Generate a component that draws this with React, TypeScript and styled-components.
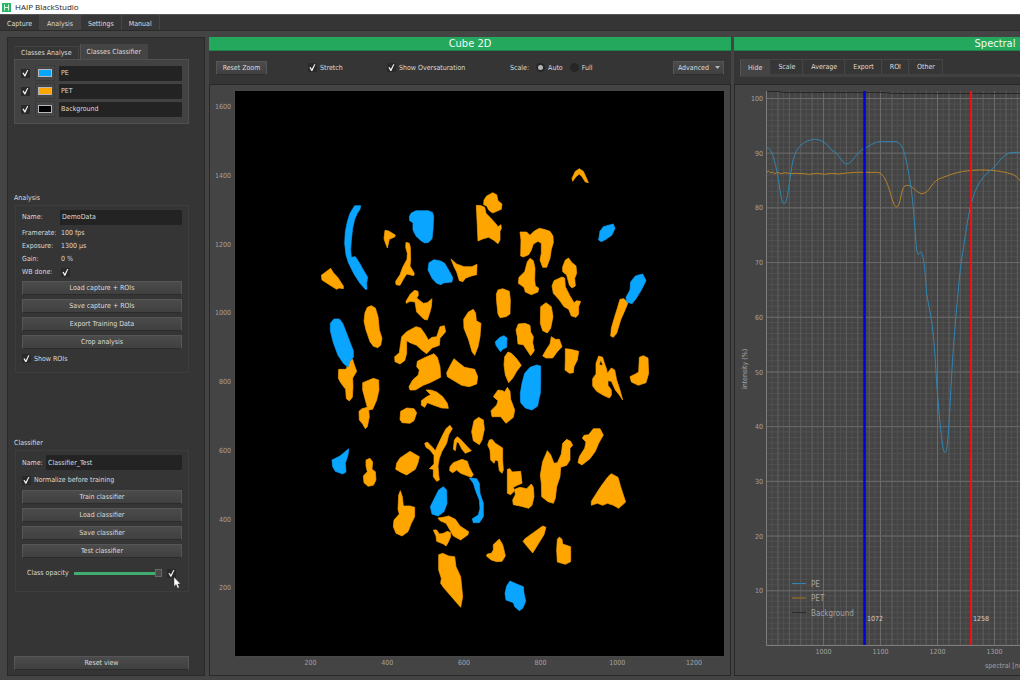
import React from 'react';
import styled, { createGlobalStyle } from 'styled-components';

const GlobalStyle = createGlobalStyle`
  *, *::before { box-sizing: border-box; }
  body {
    margin: 0;
    background: #444;
    color: #dcdcdc;
    font: 7px/10px 'DejaVu Sans Condensed', 'DejaVu Sans', sans-serif;
    overflow-x: hidden;
  }
  button, input { font: inherit; color: inherit; margin: 0; }
`;

const Page = styled.div`
  min-height: 100vh;
  display: flex;
  flex-direction: column;
  overflow: hidden;
`;

const TitleBar = styled.header`
  height: 14px;
  display: flex;
  align-items: center;
  gap: 4px;
  padding-left: 2px;
  background: #fff;
  color: #222;
  font: 8px/14px 'Open Sans', sans-serif;
`;

const MainTabs = styled.nav`
  height: 17px;
  display: flex;
  align-items: flex-end;
  background: #353535;
  border-top: 1px solid #555;
  border-bottom: 1px solid #2b2b2b;
`;

const Tab = styled.button<{ $active?: boolean; $height: number; $pad?: number }>`
  height: ${p => (p.$active ? p.$height + 2 : p.$height)}px;
  padding: 0 ${p => p.$pad ?? 7}px;
  border: 1px solid #454545;
  border-bottom: 0;
  border-left-color: ${p => (p.$active ? '#555' : '#3a3a3a')};
  background: ${p => (p.$active ? '#444' : '#363636')};
  white-space: nowrap;
`;

const MainTab = styled(Tab)`
  height: 15px;
  padding: 2px 7px 0;
  border-top: 0;
  border-left: 0;
`;

const Workspace = styled.main`
  flex: 1;
  display: grid;
  grid-template-columns: 199px minmax(522px, 1fr) minmax(522px, 1fr);
  column-gap: 3px;
  padding: 6px 7px 4px;
`;

const Sidebar = styled.aside`
  display: flex;
  flex-direction: column;
  justify-content: space-between;
  margin-right: 1px;
  padding: 6px 15px 5px 6px;
  background: #353535;
  border: 1px solid #292929;
`;

const ClassSection = styled.section`
  padding-bottom: 3px;
`;

const TabRow = styled.div`
  display: flex;
  align-items: flex-end;
  gap: 1px;
`;

const ClassList = styled.div`
  display: flex;
  flex-direction: column;
  gap: 2px;
  padding: 5px 6px 6px;
  background: #424242;
  border: 1px solid #505050;
`;

const ClassRow = styled.div`
  display: grid;
  grid-template-columns: 10px 20px 1fr;
  column-gap: 4px;
  align-items: center;
`;

const Swatch = styled.button<{ $color: string }>`
  height: 16px;
  padding: 3px 2px;
  border: 1px solid #393939;
  background: #464646;
  &::before {
    content: '';
    display: block;
    height: 8px;
    background: ${p => p.$color};
    border: 1px solid #b4b8bc;
  }
`;

const TextInput = styled.input`
  width: 100%;
  min-width: 0;
  height: 15px;
  padding: 0 2px;
  border: 0;
  border-radius: 1px;
  background: #232323;
`;

const Check = styled.input.attrs({ type: 'checkbox' })`
  appearance: none;
  flex: none;
  width: 9px;
  height: 9px;
  background: #292929;
  display: grid;
  place-items: center;
  &:checked::before {
    content: '';
    width: 7px;
    height: 7px;
    background: #f2f2f2;
    clip-path: polygon(6% 50%, 22% 44%, 40% 72%, 76% 2%, 92% 2%, 48% 100%, 34% 100%);
  }
`;

const Radio = styled.input.attrs({ type: 'radio' })`
  appearance: none;
  flex: none;
  width: 9px;
  height: 9px;
  border-radius: 50%;
  background: #262626;
  display: grid;
  place-items: center;
  &:checked::before {
    content: '';
    width: 5px;
    height: 5px;
    border-radius: 50%;
    background: #b4b4b4;
  }
`;

const Inline = styled.label`
  display: flex;
  align-items: center;
  gap: 3px;
  white-space: nowrap;
`;

const PushButton = styled.button`
  display: flex;
  align-items: center;
  justify-content: center;
  gap: 6px;
  width: 100%;
  height: 14px;
  padding: 0 5px;
  border: 1px solid #565656;
  border-bottom-color: #2c2c2c;
  background: linear-gradient(#4b4b4b, #404040);
  white-space: nowrap;
`;

const ToolButton = styled(PushButton)`
  width: auto;
  min-width: 51px;
`;

const MenuButton = styled(ToolButton)`
  padding: 0 3px 0 4px;
`;

const SectionTitle = styled.h2`
  margin: 0;
  font: inherit;
  line-height: 14px;
`;

const Group = styled.div<{ $bottom: number }>`
  display: flex;
  flex-direction: column;
  margin: 0 0 0 1px;
  padding: 4px 6px ${p => p.$bottom}px;
  border: 1px solid #3d3d3d;
`;

const NameField = styled.label<{ $label: number }>`
  display: grid;
  grid-template-columns: ${p => p.$label}px 1fr;
  align-items: center;
`;

const Facts = styled.dl`
  display: grid;
  grid-template-columns: 39px 1fr;
  grid-auto-rows: 13px;
  align-items: center;
  margin: 2px 0;
  dt, dd { margin: 0; }
`;

const ButtonStack = styled.div`
  display: flex;
  flex-direction: column;
  gap: 4px;
`;

const CheckLine = styled(Inline)`
  height: 20px;
`;

const OpacityRow = styled.div`
  display: flex;
  align-items: center;
  gap: 5px;
  padding: 10px 6px 0 5px;
  label { white-space: nowrap; }
`;

const Slider = styled.input.attrs({ type: 'range' })`
  appearance: none;
  flex: 1;
  min-width: 0;
  height: 8px;
  background: linear-gradient(#3fae6f, #3fae6f) center / 100% 3px no-repeat;
  &::-webkit-slider-thumb {
    appearance: none;
    width: 7px;
    height: 8px;
    border: 1px solid #686868;
    background: #4a4a4a;
  }
`;

const PointerSpot = styled.span`
  position: relative;
  display: flex;
  svg { position: absolute; left: 6px; top: 7px; }
`;

const Panel = styled.section`
  display: flex;
  flex-direction: column;
  min-width: 0;
  background: #353535;
`;

const PanelTitle = styled.h1`
  margin: 0;
  height: 14px;
  background: #24a85e;
  border-bottom: 1px solid #1c8349;
  color: #f0faf3;
  font-size: 11px;
  line-height: 14px;
  font-weight: 400;
  text-align: center;
`;

const Toolbar = styled.div`
  height: 33px;
  display: grid;
  grid-template-columns: 92px 79px 123px 1fr auto;
  align-items: center;
  padding: 0 7px;
`;

const RadioGroup = styled.div`
  display: flex;
  align-items: center;
  gap: 7px;
`;

const SpectralTabs = styled.div`
  height: 33px;
  display: flex;
  align-items: flex-start;
  padding: 8px 0 0 6px;
  background: linear-gradient(#414141, #414141) 6px 23px / 100% 3px no-repeat;
`;

const Graph = styled.div`
  flex: 1;
  background: #444;
  border: 1px solid #282828;
  svg { display: block; width: 100%; height: auto; }
  text { font-size: 7px; fill: #a2a2a2; }
`;

const toolIcon = (
  <svg width="9" height="9" viewBox="0 0 9 9" aria-hidden="true">
    <rect width="9" height="9" fill="#2db566" />
    <path d="M2.5 1.5v6M6.5 1.5v6M2.5 4.5h4" stroke="#d9f5e4" fill="none" />
  </svg>
);

/* Particle outlines, three units to one screen pixel, split over four tiles of the sample tray. */
type Tile = { x: number; y: number; pe: string[]; pet: string[] };

const tiles: Tile[] = [
  {
    x: 101, y: 76,
    pe: [
      '134,137 152,137 150,148 142,160 134,178 128,205 124,240 122,270 124,292 136,290 148,308 160,330 173,352 170,368 171,388 166,388 150,370 132,342 116,310 108,285 104,250 106,215 112,185 120,160',
      '308,157 318,152 355,152 368,158 371,170 369,210 366,236 356,247 345,249 334,243 318,228 309,210 309,188 299,182 298,170 303,160',
      '357,308 372,299 392,303 404,310 418,334 428,352 426,366 400,369 393,374 380,370 367,356 354,330',
      '61,490 72,477 88,477 98,490 108,515 122,552 130,572 130,592 120,604 114,622 100,610 84,586 70,548 61,512',
    ],
    pet: [
      '225,211 236,213 256,225 254,231 238,238 232,264 226,248 222,236',
      '288,247 298,250 301,262 302,300 300,318 313,340 311,347 290,342 281,356 270,376 258,374 257,364 270,344 278,322 291,298 292,280 287,262',
      '423,297 440,312 462,320 486,320 501,313 500,344 484,348 466,355 459,365 448,362 440,336 432,320',
      '34,346 62,325 70,338 83,352 100,378 100,386 87,384 80,388 70,382 36,360',
      '301,402 314,391 324,394 325,406 320,414 340,430 352,428 366,416 364,440 360,456 352,480 342,478 320,456 315,426 300,424 289,430 288,424',
      '165,458 172,442 184,437 196,444 204,470 208,510 216,535 212,556 203,563 190,559 180,545 168,510 162,484',
      '86,628 108,628 118,604 128,598 132,612 140,634 128,654 129,680 127,712 118,723 109,716 107,688 92,668 85,655',
      '158,668 190,655 206,660 207,690 200,720 188,748 176,750 178,770 172,800 166,806 158,792 148,780 147,754 156,746 172,742 166,720 158,690',
      '318,500 332,504 345,522 355,540 366,532 380,530 390,500 403,497 407,515 390,535 388,556 366,564 350,581 335,570 320,556 300,548 290,542 290,580 284,602 270,612 255,605 254,590 268,578 272,550 275,530 290,515',
      '322,604 346,592 372,581 382,592 390,620 392,652 360,668 340,676 316,690 300,690 297,680 308,660 325,645 328,630 320,620',
      '432,596 446,608 464,622 494,628 503,650 500,672 478,680 455,676 435,664 412,650 410,638 420,618',
      '461,478 475,456 490,448 497,460 499,482 513,490 510,530 504,560 494,586 486,575 476,540 462,505',
    ],
  },
  {
    x: 261, y: 76,
    pe: [
      '400,200 430,192 435,206 425,226 408,238 394,245 386,240 390,214',
      '496,348 518,342 528,362 514,390 498,416 486,431 470,426 468,412 480,390 482,366',
      '90,532 102,527 111,534 110,562 98,568 92,575 86,568 78,556 76,545',
      '164,640 180,622 200,615 212,618 212,660 211,700 206,720 203,738 186,750 166,744 152,728 151,700 156,670',
    ],
    pet: [
      '306,55 316,34 328,26 340,34 352,60 355,68 346,66 336,50 328,42 318,50 308,64',
      '50,108 68,98 80,104 84,122 96,132 94,148 80,154 68,159 56,150 50,138 41,134 42,120',
      '19,136 34,137 44,142 48,160 62,174 78,192 84,200 93,194 94,206 90,214 90,240 84,251 70,240 56,232 40,236 24,243 22,200',
      '150,216 170,216 180,226 192,214 208,205 222,208 240,214 249,228 250,248 244,268 240,295 230,322 218,322 210,300 214,280 214,250 204,244 190,252 184,270 176,284 160,291 152,288 153,240',
      '172,305 180,295 190,302 195,325 194,360 196,378 206,384 204,396 184,404 166,396 162,382 145,370 147,352 164,335',
      '286,300 296,294 304,306 318,318 320,340 314,355 316,378 306,384 298,375 290,345 278,335 278,320',
      '252,362 276,351 284,354 286,380 300,408 312,428 320,422 332,424 326,440 326,462 318,472 304,468 296,448 282,440 268,420 250,400 246,378',
      '84,390 98,386 118,394 121,420 120,462 108,470 90,473 84,462 80,425 79,402',
      '212,440 228,428 244,440 249,470 242,505 232,519 218,512 211,490',
      '450,418 462,416 474,428 466,448 452,480 440,520 430,532 422,528 424,505 434,470 442,445',
      '145,492 165,490 180,496 182,516 190,530 188,548 193,572 182,587 172,572 160,554 144,552 142,530 138,510',
      '244,530 256,538 268,538 276,560 262,575 248,594 228,594 218,588 228,570 240,552',
      '286,566 302,568 326,574 322,600 312,620 310,638 298,640 285,630 286,600',
      '104,590 114,576 124,580 140,596 154,616 140,634 128,655 116,668 106,645 102,615',
      '378,610 386,588 398,592 404,612 398,614 392,600 388,614 396,616 404,612 410,628 412,640 424,624 434,630 440,660 450,690 458,720 448,705 436,690 424,664 414,662 414,676 424,690 424,706 418,714 400,706 380,694 368,678 368,656 378,642',
      '508,592 520,587 534,594 536,640 528,668 505,676 484,666 480,650 496,642 506,636',
    ],
  },
  {
    x: 101, y: 296,
    pe: [
      '66,240 90,228 116,206 114,225 106,250 108,276 98,282 76,274 68,260',
      '386,330 400,320 410,330 411,370 402,395 384,408 366,402 361,380 372,358',
      '478,294 500,296 508,310 510,340 520,370 520,410 508,428 490,428 487,416 505,405 510,385 508,360 498,335 490,310',
    ],
    pet: [
      '348,30 362,30 380,36 398,50 412,70 415,85 395,84 372,76 352,68 344,82 334,76 334,62 350,50 362,44',
      '272,94 290,84 312,86 320,98 312,122 300,130 276,128 270,118',
      '344,190 352,186 366,200 376,212 386,190 398,165 408,146 420,136 427,146 416,165 410,190 396,214 388,235 384,258 386,285 388,300 380,304 370,290 370,268 358,266 372,252 372,226 360,210 348,202',
      '430,208 433,180 441,170 450,176 470,198 484,212 466,220 456,208 446,188 440,186 436,212',
      '492,122 506,112 520,120 523,148 516,180 508,194 490,182 485,155',
      '168,240 180,235 188,246 186,268 196,275 198,300 190,316 174,319 162,308 160,288 172,275 168,258',
      '270,234 300,214 328,230 324,248 316,268 290,285 275,278 257,268 260,250',
      '420,260 430,248 456,238 472,244 478,262 490,284 484,292 468,286 452,280 440,270 428,278 419,272',
      '264,388 266,345 271,332 277,350 280,378 300,378 314,382 314,410 304,430 294,455 276,468 258,460 250,440 252,420 268,402',
      '384,414 400,412 416,408 436,418 450,438 476,455 474,464 452,480 430,468 420,450 408,430 390,422',
      '370,450 380,450 388,462 400,460 412,454 422,458 422,470 414,488 408,498 400,492 380,484 378,468',
      '386,524 398,520 416,528 434,530 438,560 452,590 456,630 458,650 452,682 440,668 420,645 400,622 392,610 394,595 386,570',
    ],
  },
  {
    x: 261, y: 296,
    pe: ['120,603 140,612 160,620 162,640 167,664 158,685 148,692 134,680 130,668 108,660 105,640 110,618'],
    pet: [
      '70,50 84,30 98,32 104,36 112,22 120,34 122,58 134,90 130,112 108,130 92,110 66,110 63,92 80,75 84,62',
      '58,180 66,178 76,190 98,204 98,240 100,270 96,280 88,272 84,242 76,240 72,250 62,240 60,210 53,195',
      '112,268 120,266 126,276 152,274 156,310 142,316 130,322 134,332 122,344 112,340 112,310',
      '134,328 150,322 170,326 184,312 190,322 192,350 186,376 176,385 150,378 130,374 128,360 136,344',
      '232,212 242,224 252,250 262,248 274,222 278,190 290,178 302,184 308,196 300,205 300,240 290,256 272,262 270,290 260,320 256,355 250,370 234,365 215,350 214,310 211,285 218,245',
      '370,146 390,146 400,165 386,190 376,214 360,236 336,255 324,248 328,230 344,205 348,186 337,175 342,166 356,164',
      '414,290 424,281 444,292 452,320 460,345 467,366 446,385 430,376 412,370 398,376 382,370 364,376 364,364 376,345 392,320',
      '88,477 98,494 102,510 106,528 96,544 80,545 64,540 49,528 52,522 64,520 70,510 70,494',
      '218,438 228,442 222,464 206,490 188,519 176,505 159,484 165,476 190,458',
      '262,478 268,471 276,478 278,492 302,500 302,545 286,553 262,546 260,510',
    ],
  },
];

const range = (n: number) => Array.from({ length: n }, (_, i) => i);

function CubeView() {
  return (
    <svg viewBox="1 1 520 589" role="img" aria-label="Classified particles">
      <rect x="25" y="7" width="490" height="566" fill="#000" />
      <path d="M25.5 7v565.5H515" fill="none" stroke="#777" strokeWidth="0.6" />
      {range(8).map(i => (
        <text key={i} x="22" y={25 + i * 68.75} textAnchor="end">{1600 - i * 200}</text>
      ))}
      {range(6).map(i => (
        <text key={i} x={101.5 + i * 76.7} y="581" textAnchor="middle">{200 + i * 200}</text>
      ))}
      {tiles.map((t, i) => (
        <g key={i} transform={`translate(${t.x} ${t.y}) scale(0.33333)`} strokeWidth="2" strokeLinejoin="round">
          <g fill="#ffa500" stroke="#ffa500">{t.pet.map(p => <polygon key={p} points={p} />)}</g>
          <g fill="#0aa5ff" stroke="#0aa5ff">{t.pe.map(p => <polygon key={p} points={p} />)}</g>
        </g>
      ))}
    </svg>
  );
}

const PE_CURVE =
  'M110 353C128 356 134 395 142 430C150 475 154 521 162 521C172 521 176 470 184 420C190 370 205 350 218 342C232 330 245 328 256 328C280 328 295 348 306 362C325 365 335 402 350 402C368 402 375 368 404 355C425 345 435 335 452 335L498 335C520 340 526 375 536 430C548 490 552 560 558 640C560 662 562 675 566 674C569 666 574 662 577 674C585 700 586 750 590 790C596 830 604 860 607 890C614 950 617 1010 620 1060C624 1110 627 1150 630 1180C636 1230 638 1267 645 1267C652 1267 654 1230 660 1130C664 1050 668 980 672 930C676 880 680 830 685 780C690 720 696 680 704 630C710 585 716 555 722 527C730 500 736 480 744 466C760 436 776 426 792 412C808 395 822 368 850 367L1010 368';
const PET_CURVE =
  'M110 427L116 423L122 429L128 426L134 431L144 427L152 431L166 428L180 431L200 430L222 431L236 433L262 430L284 433L304 430L326 432L350 429L380 427L444 427C478 434 484 531 500 531C514 531 510 466 530 466C548 464 560 491 576 491C602 490 602 450 640 442C672 430 690 422 750 420C800 420 830 427 850 434C866 442 870 452 882 470L1010 500';

function SpectralView() {
  return (
    <svg viewBox="1 1 520 589" role="img" aria-label="Spectral intensity">
      <g fill="none">
        <path
          d={range(85).map(i => `M${32.5 + i * 5.7} 7V561`).join('')}
          stroke="#545454" strokeWidth="0.8"
        />
        <path
          d={range(101).map(i => `M32.5 ${561 - i * 5.465}H522`).join('')}
          stroke="#545454" strokeWidth="0.8"
        />
        <path d={range(43).map(i => `M${44 + i * 11.4} 7V561`).join('')} stroke="#5c5c5c" />
        <path d={range(9).map(i => `M${89.5 + i * 57} 7V561`).join('')} stroke="#6b6b6b" />
        <path d={range(10).map(i => `M32.5 ${14.5 + i * 54.7}H522`).join('')} stroke="#6b6b6b" />
        <path d="M32.5 7V561.5H522" stroke="#7d7d7d" />
        <path d="M33 7.5L45 7.5L50 8.5L150 8.5L160 9.5L522 9.5" stroke="#262626" />
        <g transform="translate(-4 -54) scale(0.33333)" strokeWidth="3">
          <path d={PET_CURVE} stroke="#b98325" />
          <path d={PE_CURVE} stroke="#2f86b4" />
        </g>
        <path d="M130.5 7V561" stroke="#0000d8" strokeWidth="2.5" />
        <path d="M237 7V561" stroke="#ee1111" strokeWidth="2" />
      </g>
      {range(10).map(i => (
        <text key={i} x="29" y={17 + i * 54.7} textAnchor="end">{100 - i * 10}</text>
      ))}
      {range(8).map(i => (
        <text key={i} x={89.5 + i * 57} y="570" textAnchor="middle">{1000 + i * 100}</text>
      ))}
      <text x="251" y="584">spectral [nm]</text>
      <text transform="translate(13 285) rotate(-90)" textAnchor="middle">intensity (%)</text>
      {[['PE', '#2f86b4'], ['PET', '#a8791f'], ['Background', '#2b2b2b']].map(([name, color], i) => (
        <g key={name}>
          <path d={`M58 ${499.5 + i * 14.5}h14`} stroke={color} />
          <text x="77" y={502.5 + i * 14.5} style={{ fontSize: 8 }}>{name}</text>
        </g>
      ))}
      <text x="133" y="537" style={{ fill: '#d0d0d0' }}>1072</text>
      <text x="239" y="537" style={{ fill: '#d0d0d0' }}>1258</text>
    </svg>
  );
}

const classes = [
  { name: 'PE', color: '#0aa5ff' },
  { name: 'PET', color: '#ffa500' },
  { name: 'Background', color: '#000' },
];

export default function App() {
  return (
    <Page>
      <GlobalStyle />
      <TitleBar>{toolIcon}HAIP BlackStudio</TitleBar>
      <MainTabs>
        {['Capture', 'Analysis', 'Settings', 'Manual'].map(t => (
          <MainTab key={t} $height={14} $active={t === 'Analysis'}>{t}</MainTab>
        ))}
      </MainTabs>
      <Workspace>
        <Sidebar>
          <ClassSection>
            <TabRow>
              <Tab $height={13} $pad={6}>Classes Analyse</Tab>
              <Tab $height={13} $pad={6} $active>Classes Classifier</Tab>
            </TabRow>
            <ClassList>
              {classes.map(c => (
                <ClassRow key={c.name}>
                  <Check defaultChecked aria-label={`Show ${c.name}`} />
                  <Swatch $color={c.color} aria-label={`${c.name} colour`} />
                  <TextInput defaultValue={c.name} aria-label="Class name" />
                </ClassRow>
              ))}
            </ClassList>
          </ClassSection>
          <section>
            <SectionTitle>Analysis</SectionTitle>
            <Group $bottom={3}>
              <NameField $label={38}>Name:<TextInput defaultValue="DemoData" /></NameField>
              <Facts>
                <dt>Framerate:</dt><dd>100 fps</dd>
                <dt>Exposure:</dt><dd>1300 µs</dd>
                <dt>Gain:</dt><dd>0 %</dd>
                <dt><label htmlFor="wb">WB done:</label></dt><dd><Check id="wb" defaultChecked /></dd>
              </Facts>
              <ButtonStack>
                {['Load capture + ROIs', 'Save capture + ROIs', 'Export Training Data', 'Crop analysis'].map(b => (
                  <PushButton key={b}>{b}</PushButton>
                ))}
              </ButtonStack>
              <CheckLine><Check defaultChecked />Show ROIs</CheckLine>
            </Group>
          </section>
          <section>
            <SectionTitle>Classifier</SectionTitle>
            <Group $bottom={13}>
              <NameField $label={24}>Name:<TextInput defaultValue="Classifier_Test" /></NameField>
              <CheckLine><Check defaultChecked />Normalize before training</CheckLine>
              <ButtonStack>
                {['Train classifier', 'Load classifier', 'Save classifier', 'Test classifier'].map(b => (
                  <PushButton key={b}>{b}</PushButton>
                ))}
              </ButtonStack>
              <OpacityRow>
                <label htmlFor="opacity">Class opacity</label>
                <Slider id="opacity" defaultValue={100} />
                <PointerSpot>
                  <Check defaultChecked aria-label="Apply opacity" />
                  <svg width="8" height="13" viewBox="0 0 8 13" aria-hidden="true">
                    <path d="M1 1v9.500l2.100-2 1.500 3.700 1.700-.7-1.500-3.500H7.500z" fill="#fff" stroke="#222" strokeWidth="0.4" />
                  </svg>
                </PointerSpot>
              </OpacityRow>
            </Group>
          </section>
          <PushButton>Reset view</PushButton>
        </Sidebar>
        <Panel>
          <PanelTitle>Cube 2D</PanelTitle>
          <Toolbar>
            <div><ToolButton>Reset Zoom</ToolButton></div>
            <Inline><Check defaultChecked />Stretch</Inline>
            <Inline><Check defaultChecked />Show Oversaturation</Inline>
            <RadioGroup role="radiogroup" aria-label="Scale">
              <span>Scale:</span>
              <Inline><Radio name="scale" defaultChecked />Auto</Inline>
              <Inline><Radio name="scale" />Full</Inline>
            </RadioGroup>
            <MenuButton aria-haspopup="menu">
              Advanced
              <svg width="5" height="3" viewBox="0 0 5 3" aria-hidden="true"><path d="M0 0h5L2.500 3z" fill="#b5b5b5" /></svg>
            </MenuButton>
          </Toolbar>
          <Graph><CubeView /></Graph>
        </Panel>
        <Panel>
          <PanelTitle>Spectral</PanelTitle>
          <SpectralTabs>
            {['Hide', 'Scale', 'Average', 'Export', 'ROI', 'Other'].map(t => (
              <Tab key={t} $height={15} $active={t === 'Hide'}>{t}</Tab>
            ))}
          </SpectralTabs>
          <Graph><SpectralView /></Graph>
        </Panel>
      </Workspace>
    </Page>
  );
}
